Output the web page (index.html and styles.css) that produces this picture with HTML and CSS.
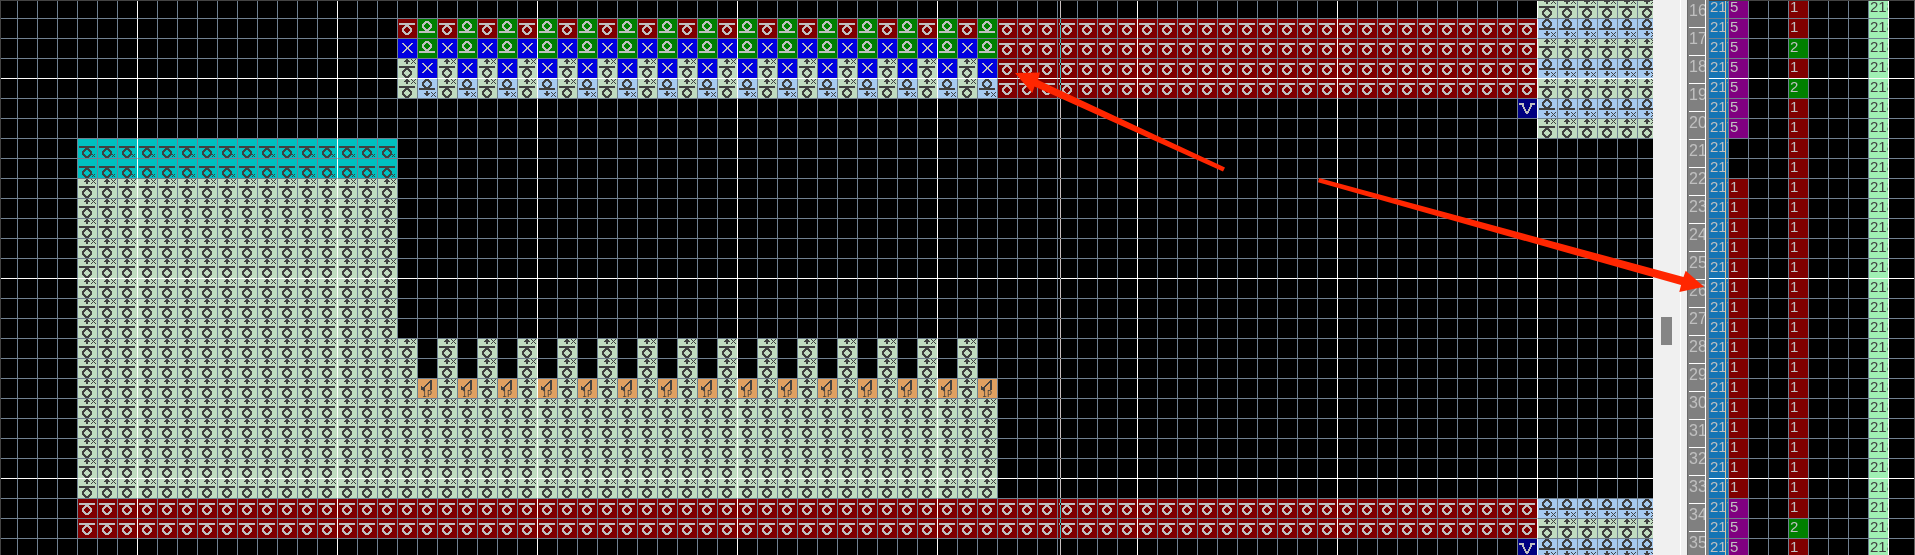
FILE: index.html
```html
<!DOCTYPE html>
<html lang="en">
<head>
<meta charset="utf-8">
<title>Knitting pattern editor</title>
<link rel="stylesheet" href="styles.css">
</head>
<body>
<svg class="defs" aria-hidden="true"><defs id="glyphs"></defs></svg>
<main class="editor">
  <section class="map" aria-label="Stitch map">
    <div class="rows" id="rows"></div>
    <div class="cursor-line"></div>
  </section>
  <div class="scroll"><div class="thumb"></div></div>
  <div class="gutter"></div>
  <ol class="ruler" id="ruler"></ol>
  <div class="divider"></div>
  <section class="options" aria-label="Option lines">
    <table class="lines"><tbody id="lines"></tbody></table>
    <div class="option-cursor"></div>
  </section>
  <svg class="arrows" width="1915" height="555" viewBox="0 0 1915 555" aria-hidden="true">
    <polygon points="1015,73 1040,72.5 1038,80 1225,167.5 1223,171.5 1034.5,86.5 1032.3,93"/>
    <polygon points="1704,286.7 1685.7,270.7 1683.5,277 1319,178 1318,182.3 1681,285 1679.3,292"/>
  </svg>
</main>
<script src="app.js"></script>
</body>
</html>
```
FILE: styles.css
```css
* { box-sizing: border-box; }
body {
  margin: 0;
  background: #000;
  font-family: "Liberation Sans", Arial, sans-serif;
}
.defs { position: absolute; width: 0; height: 0; }
.editor {
  position: relative;
  display: flex;
  height: 100vh;
  overflow: hidden;
}
.arrows {
  position: absolute;
  top: 0;
  left: 0;
  fill: #ff2600;
  pointer-events: none;
}
.map {
  position: relative;
  flex: 1;
  min-width: 0;
  overflow: hidden;
  border-top: 1px solid #444;
  border-left: 1px solid #444;
}
.rows { margin: -2px 0 0 -3px; }
.row { display: flex; }
.cell {
  position: relative;
  flex: none;
  width: 20px;
  height: 20px;
  border-right: 1px solid #708090;
  border-bottom: 1px solid #708090;
  color: #404040;
}
.major-col { border-right-color: #fff; }
.major-row .cell { border-bottom-color: #fff; }
.cell svg { display: block; width: 19px; height: 19px; fill: currentColor; }
.knit-red { background: #800000; color: #c0c0c0; }
.purl-green { background: #008000; color: #c0c0c0; }
.cross { background: #0000e0; color: #c0c0c0; }
.vee { background: #000080; color: #c0c0c0; }
.knit-up { background: #c0dcc0; }
.purl-down { background: #a6caf0; }
.knit-cyan { background: #00c0c0; }
.transfer { background: #e0a060; }
.tag {
  position: absolute;
  left: 4px;
  bottom: 0;
  font: 8px/7px "DejaVu Sans", sans-serif;
}
.cursor-line {
  position: absolute;
  top: 0;
  bottom: 0;
  left: 1059px;
  width: 1px;
  background: #c8c0c0;
  mix-blend-mode: difference;
}
.scroll {
  flex: none;
  width: 28px;
  background: #f0f0f0;
  border-right: 1px solid #fff;
  padding: 317px 8px 0;
}
.thumb { width: 11px; height: 28px; background: #858585; }
.gutter { flex: none; width: 6px; background: #f0f0f0; }
.ruler {
  flex: none;
  width: 19px;
  margin: 0;
  padding: 0 0 0 1px;
  list-style: none;
  background: #808080;
  border-left: 1px solid #696969;
  border-right: 1px solid #fff;
  overflow: hidden;
}
.ruler li {
  height: 28px;
  border-bottom: 1px solid #fff;
  color: #c0c0c0;
  font-size: 16px;
  line-height: 21px;
}
.divider { flex: none; width: 3px; background: #808080; border-right: 1px solid #708090; }
.options {
  position: relative;
  flex: none;
  width: 206px;
  overflow: hidden;
  border-top: 1px solid #444;
  border-right: 1px solid #606060;
}
.lines {
  width: 206px;
  margin-top: -2px;
  border-spacing: 0;
  table-layout: fixed;
}
.lines td {
  height: 20px;
  padding: 0 0 0 1px;
  overflow: hidden;
  white-space: nowrap;
  border-right: 1px solid #708090;
  border-bottom: 1px solid #708090;
  color: #c0c0c0;
  font-size: 15px;
  line-height: 16px;
  vertical-align: top;
}
.lines .major-row td { border-bottom-color: #fff; }
.lines .narrow { width: 20px; }
.lines .blue { background: #1474b4; }
.lines .purple { background: #800080; }
.lines .red { background: #800000; }
.lines .green { background: #008000; }
.lines .mint { background: #a0f0b4; color: #404040; border-right-color: #fff; }
.option-cursor {
  position: absolute;
  top: 0;
  bottom: 0;
  left: 16px;
  width: 1px;
  background: #d8c8a0;
}
```
FILE: app.js
```js
const SVG = "http://www.w3.org/2000/svg";

// Pixel glyphs: [x, y, width] runs on a 19 by 19 cell.
const ring = y => [
  [7, y, 4], [6, y + 1, 6], [5, y + 2, 3], [10, y + 2, 3],
  [4, y + 3, 3], [11, y + 3, 3], [4, y + 4, 2], [12, y + 4, 2],
  [4, y + 5, 2], [12, y + 5, 2], [4, y + 6, 3], [11, y + 6, 3],
  [5, y + 7, 3], [10, y + 7, 3], [6, y + 8, 6], [7, y + 9, 4]
];
const bar = y => [[1, y, 16], [1, y + 1, 16]];
const smallX = (x, y) => [
  [x, y, 1], [x + 4, y, 1], [x + 1, y + 1, 1], [x + 3, y + 1, 1], [x + 2, y + 2, 1],
  [x + 1, y + 3, 1], [x + 3, y + 3, 1], [x, y + 4, 1], [x + 4, y + 4, 1]
];
const tinyX = (x, y) => [[x, y, 1], [x + 2, y, 1], [x + 1, y + 1, 1], [x, y + 2, 1], [x + 2, y + 2, 1]];
const up = [[8, 0, 2], [7, 1, 4], [6, 2, 6], [8, 3, 2], [8, 4, 2]];
const down = [[8, 12, 2], [8, 13, 2], [6, 14, 6], [7, 15, 4], [8, 16, 2]];
const diagonals = [];
for (let i = 0; i < 10; i++) {
  diagonals.push([4 + i, 4 + i, 2], [13 - i, 4 + i, 2]);
}
const vee = [[1, 4, 5], [12, 4, 5], [1, 5, 5], [12, 5, 5]];
for (let i = 0; i < 9; i++) {
  const step = Math.floor(i / 2);
  vee.push([4 + step, 6 + i, 2], [12 - step, 6 + i, 2]);
}
const transfer = [];
for (let i = 0; i < 9; i++) transfer.push([12 - i, 1 + i, 2], [12, 1 + i, 2]);
transfer.push([12, 10, 2], [3, 7, 1], [3, 8, 2], [3, 9, 4], [3, 10, 4]);

const shapes = {
  "knit-red": [...bar(4), ...ring(6)],
  "purl-green": [...ring(2), ...bar(12)],
  "cross": diagonals,
  "vee": vee,
  "knit-up": [...up, ...smallX(13, 0), ...bar(7), ...ring(9)],
  "purl-down": [...ring(0), ...bar(9), ...down, ...smallX(13, 13)],
  "knit-cyan": [...bar(7), ...ring(9), ...tinyX(14, 15)],
  "transfer": transfer
};

for (const [name, runs] of Object.entries(shapes)) {
  const path = document.createElementNS(SVG, "path");
  path.id = name;
  path.setAttribute("shape-rendering", "crispEdges");
  path.setAttribute("d", runs.map(([x, y, w]) => `M${x} ${y}h${w}v1h-${w}z`).join(""));
  document.getElementById("glyphs").append(path);
}

function stitch(r, c) {
  if (c >= 77) {
    if (r <= 6) return r % 2 ? "purl-down" : "knit-up";
    if (r >= 25) return r % 2 ? "purl-down" : "knit-up";
    return "";
  }
  if (c === 76 && (r === 5 || r === 27)) return "vee";
  if (c >= 4 && (r === 25 || r === 26)) return "knit-red";
  if (r >= 1 && r <= 4 && c >= 50) return "knit-red";
  if (c >= 20 && c <= 49) {
    const odd = c % 2;
    if (r === 1) return odd ? "purl-green" : "knit-red";
    if (r === 2) return odd ? "purl-green" : "cross";
    if (r === 3) return odd ? "cross" : "knit-up";
    if (r === 4) return odd ? "purl-down" : "knit-up";
    if (r === 17 || r === 18) return odd ? "" : "knit-up";
    if (r === 19) return odd ? "transfer" : "knit-up";
    if (r >= 20 && r <= 24) return "knit-up";
  }
  if (c >= 4 && c <= 19) {
    if (r === 7 || r === 8) return "knit-cyan";
    if (r >= 9 && r <= 24) return "knit-up";
  }
  return "";
}

const ROWS = 28;
let map = "";
let lines = "";
for (let r = 0; r < ROWS; r++) {
  const major = r % 10 === 3 ? " major-row" : "";
  map += `<div class="row${major}">`;
  for (let c = 0; c < 83; c++) {
    const kind = stitch(r, c);
    map += `<div class="cell ${kind}${c % 10 === 6 ? " major-col" : ""}">`;
    if (kind) map += `<svg viewBox="0 0 19 19"><use href="#${kind}"/></svg>`;
    if (kind === "transfer") map += `<span class="tag">1P</span>`;
    map += "</div>";
  }
  map += "</div>";

  const five = r <= 6 || r >= 25;
  const blank = r === 7 || r === 8;
  const two = r === 2 || r === 4 || r === 26;
  const empty = `<td class="narrow"></td>`;
  lines += `<tr class="${major}"><td class="narrow blue">217</td>`
    + (blank ? empty : `<td class="narrow ${five ? "purple" : "red"}">${five ? 5 : 1}</td>`)
    + empty + empty
    + `<td class="narrow ${two ? "green" : "red"}">${two ? 2 : 1}</td>`
    + empty + empty + empty
    + `<td class="narrow mint">218</td><td></td></tr>`;
}
document.getElementById("rows").innerHTML = map;
document.getElementById("lines").innerHTML = lines;

let marks = "";
for (let n = 16; n <= 35; n++) marks += `<li>${n}</li>`;
document.getElementById("ruler").innerHTML = marks;
```
